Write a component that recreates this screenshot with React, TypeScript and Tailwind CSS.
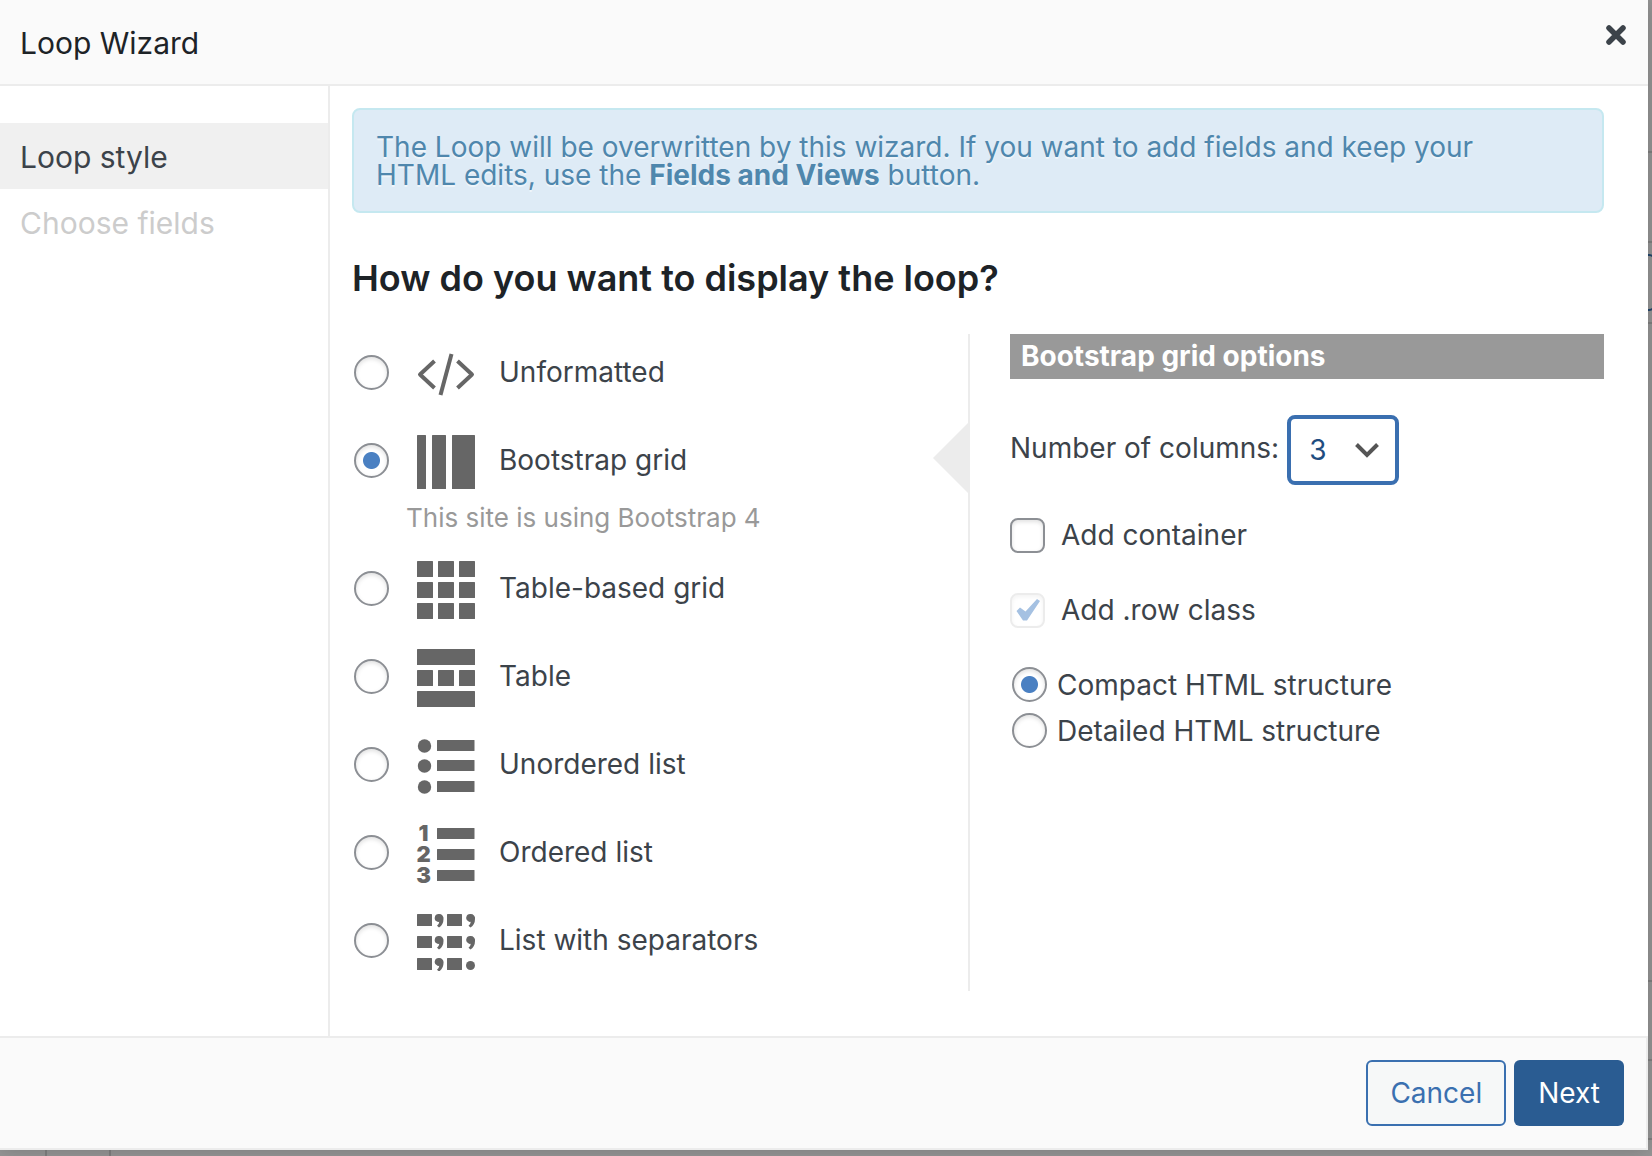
import { useState } from "react";
import type { ReactNode } from "react";

const radioClass =
  "h-[35px] w-[35px] shrink-0 appearance-none rounded-full border-2 border-[#8c8f94] bg-white shadow-[inset_0_2px_4px_rgba(0,0,0,0.12)] checked:bg-[radial-gradient(circle,#4a80c2_0_8px,transparent_9px)]";

function CodeIcon() {
  return (
    <svg width="58" height="58" viewBox="0 0 58 58" fill="none" stroke="#666" strokeLinejoin="round" aria-hidden="true">
      <path d="M17.500 16 3 29.500 17.500 43M40.500 16 55 29.500 40.500 43" strokeWidth="4" />
      <path d="M34.500 9 23.500 50" strokeWidth="4" />
    </svg>
  );
}

function ColumnsIcon() {
  return (
    <svg width="58" height="58" viewBox="0 0 58 58" fill="#666" aria-hidden="true">
      <rect x="0" y="2" width="9" height="54" rx="0.5" />
      <rect x="15" y="2" width="14" height="54" rx="0.5" />
      <rect x="35" y="2" width="23" height="54" rx="0.5" />
    </svg>
  );
}

function GridIcon() {
  const steps = [0, 21, 42];
  return (
    <svg width="58" height="58" viewBox="0 0 58 58" fill="#666" aria-hidden="true">
      {steps.map((y) => steps.map((x) => <rect key={`${x}-${y}`} x={x} y={y} width="16" height="16" rx="0.5" />))}
    </svg>
  );
}

function TableIcon() {
  return (
    <svg width="58" height="58" viewBox="0 0 58 58" fill="#666" aria-hidden="true">
      <rect x="0" y="0" width="58" height="16" rx="0.5" />
      <rect x="0" y="21" width="16" height="16" rx="0.5" />
      <rect x="21" y="21" width="16" height="16" rx="0.5" />
      <rect x="42" y="21" width="16" height="16" rx="0.5" />
      <rect x="0" y="42" width="58" height="16" rx="0.5" />
    </svg>
  );
}

function BulletsIcon() {
  return (
    <svg width="58" height="58" viewBox="0 0 58 58" fill="#666" aria-hidden="true">
      {[9, 29, 50].map((y) => (
        <g key={y}>
          <circle cx="7.5" cy={y} r="6.7" />
          <rect x="20" y={y - 6} width="37.5" height="11" rx="0.5" />
        </g>
      ))}
    </svg>
  );
}

function NumbersIcon() {
  return (
    <svg className="overflow-visible" width="58" height="58" viewBox="0 0 58 58" fill="#666" aria-hidden="true">
      {[9, 30, 51].map((y, i) => (
        <g key={y}>
          <text x="6.5" y={y + 7} fontSize="22" fontWeight="900" textAnchor="middle" fontFamily="Inter, sans-serif">
            {i + 1}
          </text>
          <rect x="20" y={y - 6} width="37.5" height="11" rx="0.5" />
        </g>
      ))}
    </svg>
  );
}

function SeparatorsIcon() {
  const comma = "M4 0a4 4 0 0 0-1.5 7.8q1 .3 1.8 0Q4 10.500 2 11.800L4 13.600Q8.500 10.500 8.500 5A4.300 4.300 0 0 0 4 0Z";
  return (
    <svg width="58" height="58" viewBox="0 0 58 58" fill="#666" aria-hidden="true">
      {[1, 23, 45].map((y) => (
        <g key={y} transform={`translate(0 ${y})`}>
          <rect x="0" y="0" width="15" height="12" rx="0.5" />
          <path d={comma} transform="translate(18 0)" />
          <rect x="30" y="0" width="15" height="12" rx="0.5" />
          {y < 45 ? <path d={comma} transform="translate(49.500 0)" /> : <circle cx="53.500" cy="7.500" r="4.500" />}
        </g>
      ))}
    </svg>
  );
}

const loopStyles: { id: string; label: string; icon: ReactNode; hint?: string }[] = [
  { id: "unformatted", label: "Unformatted", icon: <CodeIcon /> },
  { id: "bootstrap-grid", label: "Bootstrap grid", icon: <ColumnsIcon />, hint: "This site is using Bootstrap 4" },
  { id: "table-grid", label: "Table-based grid", icon: <GridIcon /> },
  { id: "table", label: "Table", icon: <TableIcon /> },
  { id: "unordered", label: "Unordered list", icon: <BulletsIcon /> },
  { id: "ordered", label: "Ordered list", icon: <NumbersIcon /> },
  { id: "separators", label: "List with separators", icon: <SeparatorsIcon /> },
];

// Sliver of the editor page that stays visible behind the dialog
function Backdrop() {
  return (
    <div className="absolute inset-0 overflow-hidden bg-[#969696]" aria-hidden="true">
      <div className="absolute top-[151px] right-0 h-[2px] w-10 bg-[#808080]" />
      <div className="absolute top-[241px] right-0 h-[2px] w-10 bg-[#808080]" />
      <div className="absolute top-[254px] -right-[3px] h-[57px] w-10 rounded-[6px] border-2 border-[#22456b]" />
      <div className="absolute top-[322px] right-0 h-[2px] w-10 bg-[#808080]" />
      <div className="absolute top-[980px] right-0 h-[2px] w-10 bg-[#808080]" />
      <div className="absolute top-[1059px] right-0 h-[2px] w-10 bg-[#808080]" />
      <div className="absolute top-[1138px] right-0 h-[2px] w-10 bg-[#808080]" />
      <div className="absolute bottom-0 left-[45px] h-10 w-[66px] border-x-2 border-[#808080]" />
    </div>
  );
}

export default function App() {
  const [style, setStyle] = useState("bootstrap-grid");
  const [columns, setColumns] = useState("3");
  const [container, setContainer] = useState(false);
  const [structure, setStructure] = useState("compact");

  return (
    <div className="relative min-h-screen pr-1 font-['Inter',sans-serif] text-[28px] leading-[35px] text-[#3c434a]">
      <Backdrop />

      <div role="dialog" aria-labelledby="wizard-title" className="relative bg-white shadow-[0_0_20px_rgba(0,0,0,0.2)]">
        <header className="flex h-[86px] items-center justify-between border-b-2 border-[#ececec] bg-[#fafafa] px-5 pt-0.5">
          <h1 id="wizard-title" className="text-[30px] text-[#1d2327]">
            Loop Wizard
          </h1>
          <button type="button" aria-label="Close" className="mb-4">
            <svg width="24" height="24" viewBox="0 0 24 24" fill="none" stroke="#3c434a" strokeWidth="5.5" strokeLinecap="round" aria-hidden="true">
              <path d="M5 5l14 14M19 5L5 19" />
            </svg>
          </button>
        </header>

        <div className="flex">
          <nav className="w-[330px] shrink-0 border-r-2 border-[#ececec] pt-[37px] text-[30px]">
            <ul>
              <li className="flex h-[66px] items-center bg-[#f0f0f0] px-5 pt-0.5">Loop style</li>
              <li className="flex h-[66px] items-center px-5 pt-0.5 text-[#ccc]">Choose fields</li>
            </ul>
          </nav>

          <main className="grow pt-[22px] pr-11 pb-[45px] pl-[22px]">
            <div className="rounded-lg border-2 border-[#c5e8f0] bg-[#deebf6] px-[22px] pt-[23px] pb-[22px] leading-[28px] text-[#4f87ad] [text-shadow:0_2px_0_rgba(255,255,255,0.5)]">
              The Loop will be overwritten by this wizard. If you want to add fields and keep your
              <br />
              HTML edits, use the <strong className="font-bold">Fields and Views</strong> button.
            </div>

            <h2 className="mt-[43px] mb-7 text-[36px] leading-[44px] font-semibold text-[#1d2327]">
              How do you want to display the loop?
            </h2>

            <div className="flex">
              <ul className="grow pb-[7px]">
                {loopStyles.map((item) => (
                  <li key={item.id}>
                    <label className="flex h-[88px] items-center pl-0.5">
                      <input
                        type="radio"
                        name="loop-style"
                        checked={style === item.id}
                        onChange={() => setStyle(item.id)}
                        className={radioClass}
                      />
                      <span className="mt-1 mr-6 ml-7">{item.icon}</span>
                      {item.label}
                    </label>
                    {item.hint && <p className="h-10 pl-[54px] text-[26px] leading-[28px] text-[#999]">{item.hint}</p>}
                  </li>
                ))}
              </ul>

              <section className="relative mt-1.5 w-[636px] shrink-0 border-l-2 border-[#ececec] pl-10">
                <svg className="absolute top-[88px] -left-[37px]" width="36" height="72" viewBox="0 0 36 72" fill="#ececec" aria-hidden="true">
                  <path d="M36 0v72L0 36z" />
                </svg>

                <h3 className="bg-[#999] px-[11px] py-[5px] font-bold text-white">Bootstrap grid options</h3>

                <div className="mt-9 flex h-[70px] items-center">
                  <label htmlFor="columns" className="pb-1">
                    Number of columns:
                  </label>
                  <div className="relative ml-2">
                    <select
                      id="columns"
                      value={columns}
                      onChange={(e) => setColumns(e.target.value)}
                      className="h-[70px] w-[112px] appearance-none rounded-lg border-4 border-[#3a6fb0] bg-white pl-[18px] text-[#1f4d80] outline-none"
                    >
                      {["1", "2", "3", "4", "6", "12"].map((n) => (
                        <option key={n}>{n}</option>
                      ))}
                    </select>
                    <svg className="pointer-events-none absolute top-[26px] right-[19px]" width="26" height="18" viewBox="0 0 26 18" fill="none" stroke="#555" strokeWidth="4" aria-hidden="true">
                      <path d="M2.500 3.500 13 14 23.500 3.500" />
                    </svg>
                  </div>
                </div>

                <label className="mt-[33px] flex items-center gap-4">
                  <input
                    type="checkbox"
                    checked={container}
                    onChange={(e) => setContainer(e.target.checked)}
                    className="h-[35px] w-[35px] shrink-0 appearance-none rounded-lg border-2 border-[#8c8f94] bg-white shadow-[inset_0_2px_4px_rgba(0,0,0,0.12)] checked:bg-[#3582c4]"
                  />
                  Add container
                </label>

                <label className="mt-10 flex items-center gap-4">
                  <span className="relative h-[35px]">
                    <input
                      type="checkbox"
                      checked
                      disabled
                      readOnly
                      className="block h-[35px] w-[35px] appearance-none rounded-lg border-2 border-[#ececec] bg-white shadow-[inset_0_2px_4px_rgba(0,0,0,0.05)]"
                    />
                    <svg className="pointer-events-none absolute inset-0" width="35" height="35" viewBox="0 0 35 35" fill="#a5c1e2" aria-hidden="true">
                      <path d="M6.500 18 10 14.500l5.500 4L27 6l3 2L17 27.500h-4z" />
                    </svg>
                  </span>
                  Add .row class
                </label>

                <div className="mt-[38px] flex flex-col gap-[11px] pl-0.5">
                  <label className="flex items-center gap-2.5">
                    <input type="radio" name="structure" checked={structure === "compact"} onChange={() => setStructure("compact")} className={radioClass} />
                    <span className="pt-0.5">Compact HTML structure</span>
                  </label>
                  <label className="-mt-0.5 flex items-center gap-2.5">
                    <input type="radio" name="structure" checked={structure === "detailed"} onChange={() => setStructure("detailed")} className={radioClass} />
                    <span className="pt-0.5">Detailed HTML structure</span>
                  </label>
                </div>
              </section>
            </div>
          </main>
        </div>

        <footer className="flex justify-end gap-2 border-2 border-l-0 border-[#ececec] bg-[#fafafa] py-[22px] pr-[22px]">
          <button type="button" className="h-[66px] rounded-md border-2 border-[#3a70b0] bg-[#f6f8f8] px-[22px] text-[#3a70b0]">
            Cancel
          </button>
          <button type="button" className="h-[66px] rounded-md bg-[#2a5c92] px-6 text-white">
            Next
          </button>
        </footer>
      </div>
    </div>
  );
}
